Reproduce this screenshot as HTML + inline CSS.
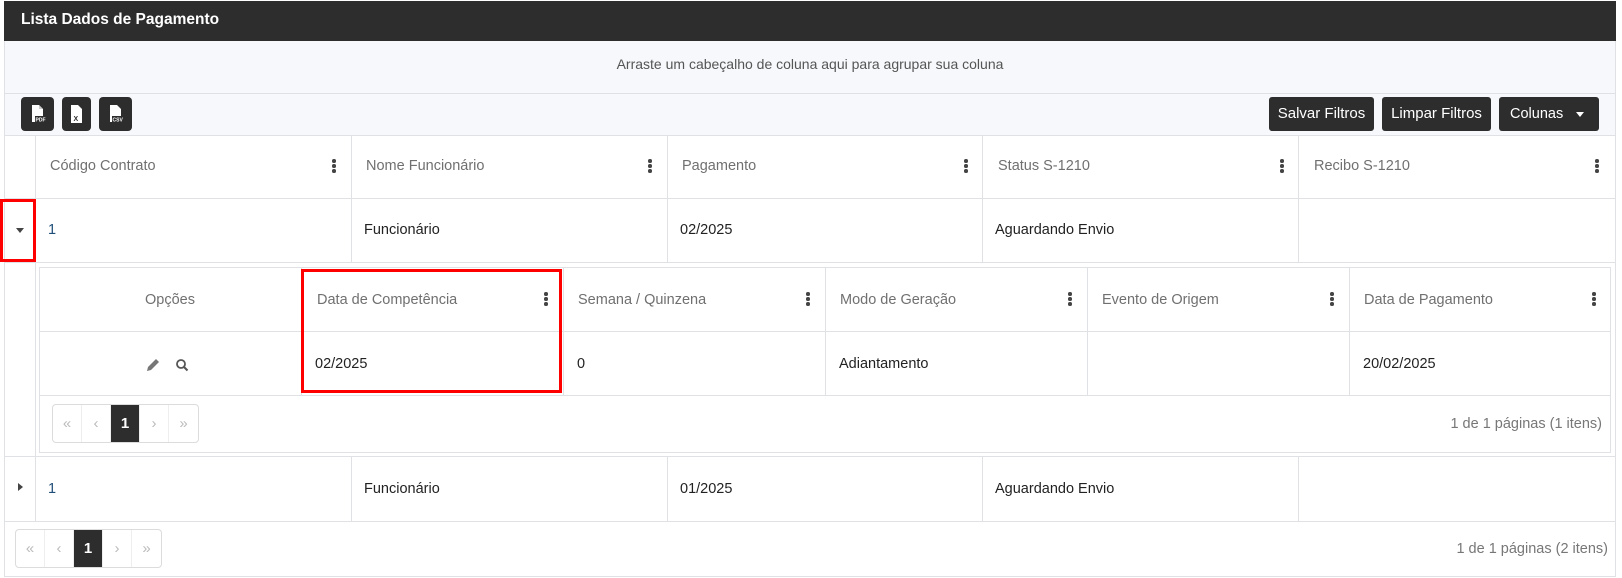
<!DOCTYPE html>
<html><head><meta charset="utf-8"><style>
*{box-sizing:border-box;margin:0;padding:0}
body{width:1622px;height:578px;background:#fff;font-family:"Liberation Sans",sans-serif;font-size:14.5px;color:#222;position:relative;overflow:hidden}
.a{position:absolute}
.hl{position:absolute;height:1px;background:#dfe1e5}
.vl{position:absolute;width:1px;background:#dfe1e5}
.th{position:absolute;color:#707070;font-weight:normal;font-size:14.5px}
.td{position:absolute;font-size:14.5px;color:#222}
.dots{position:absolute;width:4px}
.dots i{display:block;width:3.5px;height:3.5px;border-radius:50%;background:#444;margin-bottom:1.5px}
.btn{position:absolute;background:#2d2d2d;color:#fff;border-radius:3px;font-size:15px;text-align:center;line-height:34px}
.ib{position:absolute;background:#2d2d2d;border-radius:4px;width:33px;height:34px}
.pg{position:absolute;border:1px solid #dcdcdc;border-radius:4px;height:39px;display:flex}
.pg span{width:29px;text-align:center;line-height:37px;color:#bbb;font-size:15px;border-right:1px solid #eee}
.pg span:last-child{border-right:none}
.pg span.on{background:#2d2d2d;color:#fff;font-weight:bold}
</style></head><body>
<div class="a" style="left:4px;top:1px;width:1612px;height:576px;border:1px solid #dfe1e5"></div>
<div class="a" style="left:4px;top:1px;width:1612px;height:40px;background:#2d2d2d"></div>
<div class="a" style="left:21px;top:11px;color:#fff;font-weight:bold;font-size:15.5px">Lista Dados de Pagamento</div>
<div class="a" style="left:5px;top:41px;width:1610px;height:94px;background:#f6f8fb"></div>
<div class="a" style="left:4px;top:56px;width:1612px;text-align:center;color:#555;font-size:14px">Arraste um cabeçalho de coluna aqui para agrupar sua coluna</div>
<div class="hl" style="left:5px;top:93px;width:1610px"></div>
<div class="ib" style="left:21px;top:97px"><svg width="33" height="34"><path d="M11 8h7l4 4v13h-11z" fill="#fff"/><path d="M18 8v4h4" fill="#ccc"/><rect x="14" y="19" width="10" height="6" fill="#2d2d2d"/><text x="14.5" y="24.5" font-size="5" fill="#fff" font-family="Liberation Sans" font-weight="bold">PDF</text></svg></div>
<div class="ib" style="left:62px;top:97px;width:29px"><svg width="29" height="34"><path d="M9 8h7l4 4v14h-11z" fill="#fff"/><text x="11.5" y="24" font-size="7" fill="#2d2d2d" font-family="Liberation Sans" font-weight="bold">X</text></svg></div>
<div class="ib" style="left:99px;top:97px"><svg width="33" height="34"><path d="M11 8h7l4 4v13h-11z" fill="#fff"/><rect x="13" y="19" width="12" height="6" fill="#2d2d2d"/><text x="13.5" y="24.5" font-size="5" fill="#fff" font-family="Liberation Sans" font-weight="bold">CSV</text></svg></div>
<div class="btn" style="left:1269px;top:97px;width:105px">Salvar Filtros</div>
<div class="btn" style="left:1382px;top:97px;width:109px">Limpar Filtros</div>
<div class="btn" style="left:1499px;top:97px;width:100px;text-align:left;padding-left:11px;font-size:14.5px">Colunas<span style="position:absolute;right:15px;top:15px;border:4.5px solid transparent;border-top:5px solid #fff;border-bottom:none"></span></div>
<div class="hl" style="left:5px;top:135px;width:1610px"></div>
<div class="vl" style="left:35px;top:135px;height:127px"></div>
<div class="vl" style="left:351px;top:135px;height:127px"></div>
<div class="vl" style="left:667px;top:135px;height:127px"></div>
<div class="vl" style="left:982px;top:135px;height:127px"></div>
<div class="vl" style="left:1298px;top:135px;height:127px"></div>
<div class="th" style="left:50px;top:158px">Código Contrato</div>
<div class="th" style="left:366px;top:158px">Nome Funcionário</div>
<div class="th" style="left:682px;top:158px">Pagamento</div>
<div class="th" style="left:998px;top:158px">Status S-1210</div>
<div class="th" style="left:1314px;top:158px">Recibo S-1210</div>
<div class="dots" style="left:332px;top:159px"><i></i><i></i><i></i></div>
<div class="dots" style="left:648px;top:159px"><i></i><i></i><i></i></div>
<div class="dots" style="left:964px;top:159px"><i></i><i></i><i></i></div>
<div class="dots" style="left:1280px;top:159px"><i></i><i></i><i></i></div>
<div class="dots" style="left:1595px;top:159px"><i></i><i></i><i></i></div>
<div class="hl" style="left:5px;top:198px;width:1610px"></div>
<div class="a" style="left:16px;top:228px;border:4.5px solid transparent;border-top:5px solid #444;border-bottom:none"></div>
<div class="td" style="left:48px;top:222px;color:#1f4e79">1</div>
<div class="td" style="left:364px;top:222px">Funcionário</div>
<div class="td" style="left:680px;top:222px">02/2025</div>
<div class="td" style="left:995px;top:222px">Aguardando Envio</div>
<div class="a" style="left:0;top:199px;width:36px;height:63px;border:3px solid #f00"></div>
<div class="hl" style="left:5px;top:262px;width:1610px"></div>
<div class="vl" style="left:35px;top:262px;height:194px"></div>
<div class="a" style="left:39px;top:267px;width:1572px;height:186px;border:1px solid #dfe1e5"></div>
<div class="vl" style="left:301px;top:267px;height:128px"></div>
<div class="vl" style="left:563px;top:267px;height:128px"></div>
<div class="vl" style="left:825px;top:267px;height:128px"></div>
<div class="vl" style="left:1087px;top:267px;height:128px"></div>
<div class="vl" style="left:1349px;top:267px;height:128px"></div>
<div class="th" style="left:39px;width:262px;text-align:center;top:292px">Opções</div>
<div class="th" style="left:317px;top:292px">Data de Competência</div>
<div class="th" style="left:578px;top:292px">Semana / Quinzena</div>
<div class="th" style="left:840px;top:292px">Modo de Geração</div>
<div class="th" style="left:1102px;top:292px">Evento de Origem</div>
<div class="th" style="left:1364px;top:292px">Data de Pagamento</div>
<div class="dots" style="left:544px;top:292px"><i></i><i></i><i></i></div>
<div class="dots" style="left:806px;top:292px"><i></i><i></i><i></i></div>
<div class="dots" style="left:1068px;top:292px"><i></i><i></i><i></i></div>
<div class="dots" style="left:1330px;top:292px"><i></i><i></i><i></i></div>
<div class="dots" style="left:1592px;top:292px"><i></i><i></i><i></i></div>
<div class="hl" style="left:39px;top:331px;width:1572px"></div>
<svg class="a" style="left:145px;top:357px" width="50" height="16"><path d="M2 14l1-4 8-8 3 3-8 8z" fill="#777"/><circle cx="36" cy="7" r="4" fill="none" stroke="#555" stroke-width="1.8"/><path d="M39 10l3.5 3.5" stroke="#555" stroke-width="2"/></svg>
<div class="td" style="left:315px;top:356px">02/2025</div>
<div class="td" style="left:577px;top:356px">0</div>
<div class="td" style="left:839px;top:356px">Adiantamento</div>
<div class="td" style="left:1363px;top:356px">20/02/2025</div>
<div class="a" style="left:301px;top:269px;width:261px;height:124px;border:3px solid #f00"></div>
<div class="hl" style="left:39px;top:395px;width:1572px"></div>
<div class="pg" style="left:52px;top:404px"><span>«</span><span>‹</span><span class="on">1</span><span>›</span><span>»</span></div>
<div class="a" style="right:20px;top:416px;color:#777;font-size:14.5px">1 de 1 páginas (1 itens)</div>
<div class="hl" style="left:5px;top:456px;width:1610px"></div>
<div class="vl" style="left:35px;top:456px;height:65px"></div>
<div class="vl" style="left:351px;top:456px;height:65px"></div>
<div class="vl" style="left:667px;top:456px;height:65px"></div>
<div class="vl" style="left:982px;top:456px;height:65px"></div>
<div class="vl" style="left:1298px;top:456px;height:65px"></div>
<div class="a" style="left:18px;top:483px;border:4.5px solid transparent;border-left:5px solid #444;border-right:none"></div>
<div class="td" style="left:48px;top:481px;color:#1f4e79">1</div>
<div class="td" style="left:364px;top:481px">Funcionário</div>
<div class="td" style="left:680px;top:481px">01/2025</div>
<div class="td" style="left:995px;top:481px">Aguardando Envio</div>
<div class="hl" style="left:5px;top:521px;width:1610px"></div>
<div class="pg" style="left:15px;top:529px"><span>«</span><span>‹</span><span class="on">1</span><span>›</span><span>»</span></div>
<div class="a" style="right:14px;top:541px;color:#777;font-size:14.5px">1 de 1 páginas (2 itens)</div>
</body></html>
